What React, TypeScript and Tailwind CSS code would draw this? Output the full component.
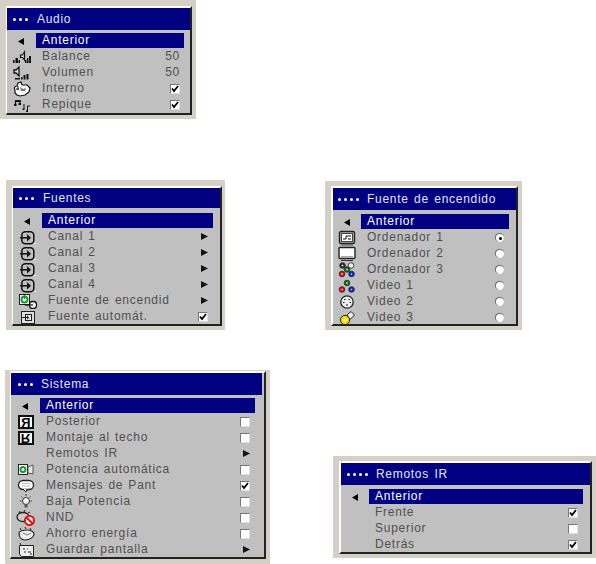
import React from "react";

const Back = () => (
  <svg width="7" height="7" viewBox="0 0 7 7"><path d="M0 3.5 6 0V7Z" fill="#000" /></svg>
);
const Arrow = () => (
  <svg width="7" height="7" viewBox="0 0 7 7" className="block"><path d="M0 0 7 3.5 0 7Z" fill="#111" /></svg>
);
const Check = ({ on }: { on?: boolean }) => (
  <div className="w-[10px] h-[10px] bg-white border-t border-l border-t-[#777] border-l-[#777] border-r border-b border-r-[#ddd] border-b-[#ddd] flex items-center justify-center">
    {on && (
      <svg width="8" height="8" viewBox="0 0 8 8" className="block"><path d="M1 3.5 3 6 7 1" fill="none" stroke="#000" strokeWidth="1.8" /></svg>
    )}
  </div>
);
const Radio = ({ on }: { on?: boolean }) => (
  <div className="w-[9px] h-[9px] rounded-full bg-white border-t border-l border-t-[#666] border-l-[#666] flex items-center justify-center">
    {on && <div className="w-[3px] h-[3px] rounded-full bg-black" />}
  </div>
);

const S = ({ w = 18, h = 16, children }: { w?: number; h?: number; children: React.ReactNode }) => (
  <svg width={w} height={h} viewBox={`0 0 ${w} ${h}`} className="block">{children}</svg>
);

const Balance = () => (
  <S w={20}>
    <path d="M1 14V11H2.5V14ZM3.5 14V9H6V14ZM6.5 14V11H8V14Z" fill="#111" />
    <path d="M8.5 6H10.5L12.5 3V11L10.5 8.5H8.5Z" fill="#ddd" stroke="#111" strokeWidth="1.2" />
    <path d="M13 14V11H14.5V14ZM15 14V9H16.5V14ZM17 14V7H19V14Z" fill="#111" />
  </S>
);
const Volumen = () => (
  <S w={20}>
    <path d="M2 5H4L7 2V11L4 8H2Z" fill="#ddd" stroke="#111" strokeWidth="1.3" />
    <path d="M3 13H8V14.5H3ZM9 14.5V12H10.5V14.5ZM11.5 14.5V10H13.5V14.5ZM14.5 14.5V9H16.5V14.5Z" fill="#111" />
  </S>
);
const Interno = () => (
  <S w={20}>
    <path d="M3 9C1 6 4 5 5 5L6 2 9 1 10 4 15 4 18 7 17 11 13 14 8 15 5 14 3 12Z" fill="#fff" stroke="#111" strokeWidth="1.2" />
    <path d="M8 6 11 8 14 7 13 10 9 10Z" fill="#777" />
    <path d="M6 5V9M4 8H7" stroke="#111" strokeWidth="1" />
  </S>
);
const Repique = () => (
  <S w={18}>
    <path d="M2.5 8V4H7V7" fill="none" stroke="#111" strokeWidth="1.3" />
    <path d="M2.5 3H7.5V5H2.5ZM1 7H3.5V9H1ZM5.5 6H8V8H5.5Z" fill="#111" />
    <path d="M11 7V12M14.5 9V14M14.5 9H17" fill="none" stroke="#111" strokeWidth="1" />
    <path d="M9.5 11.5H11.5V13H9.5ZM13 13.5H15V15H13Z" fill="#111" />
  </S>
);
const Canal = ({ n }: { n: string }) => (
  <S w={18}>
    <rect x="2.8" y="2.8" width="12" height="12" rx="3.5" fill="none" stroke="#111" strokeWidth="1.5" />
    <path d="M1 8.8H10" stroke="#111" strokeWidth="1.5" />
    <path d="M8 5 12 8.8 8 12.5Z" fill="#111" />
    <path d="M15 14.5H17" stroke="#fff" strokeWidth="1" />
    <title>{n}</title>
  </S>
);
const PowerSrc = () => (
  <S w={20}>
    <rect x="1.5" y="1.5" width="10" height="10" fill="#fff" stroke="#222" />
    <circle cx="6.5" cy="6.5" r="3" fill="none" stroke="#1a9a2a" strokeWidth="2" />
    <path d="M6.5 2V6" stroke="#1a9a2a" strokeWidth="1.5" />
    <rect x="11.5" y="8.5" width="7" height="7" rx="3" fill="#fff" stroke="#111" strokeWidth="1.3" />
    <path d="M7 12H15" stroke="#111" strokeWidth="1.3" />
  </S>
);
const Auto = () => (
  <S w={18}>
    <rect x="2.5" y="2.5" width="13" height="12" fill="#ddd" stroke="#222" />
    <rect x="6.5" y="5.5" width="6" height="6" fill="none" stroke="#222" />
    <path d="M3 8.5H9" stroke="#222" />
    <path d="M8 6.5 10 8.5 8 10.5Z" fill="#222" />
  </S>
);
const Mon1 = () => (
  <S w={18}>
    <rect x="1.5" y="1.5" width="15" height="12" rx="1.5" fill="#bbb" stroke="#222" strokeWidth="1.4" />
    <rect x="3.5" y="3.5" width="11" height="8" fill="#fff" stroke="#444" />
    <path d="M5 9H8V6H13M10 9H13" fill="none" stroke="#111" />
    <path d="M3 15H15" stroke="#555" />
  </S>
);
const Mon2 = () => (
  <S w={18}>
    <rect x="1" y="1.5" width="16" height="11" rx="1" fill="#fff" stroke="#222" strokeWidth="1.4" />
    <path d="M3 11H15" stroke="#aaa" strokeWidth="2" />
    <path d="M3 14.5H15" stroke="#333" />
  </S>
);
const Plug = ({ x, y, c }: { x: number; y: number; c: string }) => (
  <>
    <circle cx={x} cy={y} r={2.8} fill={c} stroke="#222" strokeWidth="0.8" />
    <circle cx={x} cy={y} r={0.8} fill="#fff" />
  </>
);
const Rgb3 = () => (
  <S w={18}>
    <Plug x={4.5} y={3.5} c="#333" />
    <Plug x={13} y={3.5} c="#eee" />
    <Plug x={9} y={7.5} c="#0a7a1a" />
    <Plug x={4} y={12} c="#e01010" />
    <Plug x={13.5} y={12} c="#1020d0" />
  </S>
);
const Rgb1 = () => (
  <S w={18}>
    <Plug x={9} y={5} c="#0a7a1a" />
    <Plug x={4} y={11.5} c="#e01010" />
    <Plug x={13.5} y={11.5} c="#1020d0" />
  </S>
);
const SVideo = () => (
  <S w={18}>
    <circle cx="9" cy="8" r="6.2" fill="#eee" stroke="#222" strokeWidth="1.3" />
    <path d="M6 5.5H7.5M10.5 5.5H12M5 8.5H6.5M11.5 8.5H13M8 11H10" stroke="#222" />
  </S>
);
const Rca = () => (
  <S w={18}>
    <path d="M9 5 13 1.5 16.5 5 12 9.5Z" fill="#eee" stroke="#222" />
    <circle cx="7" cy="10" r="4.6" fill="#f0e010" stroke="#222" />
    <circle cx="7" cy="10" r="1.6" fill="#fff8a0" />
  </S>
);
const Flip = ({ v }: { v?: boolean }) => (
  <div className="w-4 h-[14px] bg-white border-2 border-[#111] flex items-center justify-center overflow-hidden">
    <span className={v ? "-scale-y-100 font-bold text-[13px] leading-none text-black" : "-scale-x-100 font-bold text-[13px] leading-none text-black"}>R</span>
  </div>
);
const PowerAuto = () => (
  <S w={18}>
    <rect x="1.5" y="2.5" width="9" height="10" fill="#fff" stroke="#222" />
    <circle cx="6" cy="7.5" r="2.5" fill="none" stroke="#1a9a2a" strokeWidth="2" />
    <path d="M11 5 16 3V12L11 11Z" fill="#e8e8e8" stroke="#555" />
  </S>
);
const Msg = () => (
  <S w={18}>
    <rect x="1.5" y="2.5" width="15" height="9" rx="4.5" fill="#fff" stroke="#222" strokeWidth="1.3" />
    <path d="M6 11 9 14 10 11" fill="#fff" stroke="#222" />
    <path d="M5 5.5H13M5 8H13" stroke="#bbb" />
  </S>
);
const Bulb = () => (
  <S w={18}>
    <circle cx="9" cy="7" r="3.5" fill="#f4f4f4" stroke="#333" />
    <rect x="7.5" y="10" width="3" height="3.5" fill="#555" />
    <path d="M9 0V2M3 7H4.5M13.5 7H15M4.5 2.5 5.5 3.5M13.5 2.5 12.5 3.5" stroke="#444" />
  </S>
);
const Nnd = () => (
  <S w={20}>
    <ellipse cx="7" cy="7" rx="6" ry="4.5" fill="#ccc" stroke="#222" strokeWidth="1.3" />
    <path d="M3 3 4 1M8 2 9 0M12 3 14 2" stroke="#222" />
    <circle cx="13.5" cy="10.5" r="4.5" fill="#fff" stroke="#e01010" strokeWidth="2" />
    <path d="M10.5 7.5 16.5 13.5" stroke="#e01010" strokeWidth="2" />
  </S>
);
const Ahorro = () => (
  <S w={20}>
    <path d="M3 7C3 5 8 4 11 4 15 4 18 6 18 8 18 11 14 14 9 14 5 14 3 11 3 7Z" fill="#eee" stroke="#222" strokeWidth="1.2" />
    <path d="M4 2 5 4M9 1 10 3M14 2 15 4" stroke="#222" />
    <path d="M7 7 11 9 15 7" fill="none" stroke="#777" />
  </S>
);
const Screen = () => (
  <S w={18}>
    <path d="M2.5 3.5H16.5V14.5H4.5L2.5 12Z" fill="#eee" stroke="#222" />
    <path d="M3 1 4 3" stroke="#222" />
    <path d="M6 7H8M10 7H11M7 10H9M11 10H14M13 12H15" stroke="#222" />
  </S>
);

type RowProps = {
  icon?: React.ReactNode;
  label: string;
  right?: React.ReactNode;
  active?: boolean;
};

const Row = ({ icon, label, right, active, iconCol, mr, pr }: RowProps & { iconCol: string; mr: string; pr: string }) => (
  <div className="flex h-4">
    <div className={`${iconCol} h-[16px] flex items-center justify-center`}>{icon}</div>
    <div
      className={`${mr} ${pr} flex-1 h-[15px] pl-[6px] flex items-center justify-between text-[12px] leading-none tracking-[0.75px] [word-spacing:1px] whitespace-nowrap ${
        active ? "bg-[#000080] text-white" : "text-[#505050]"
      }`}
    >
      <span className="mb-[2px]">{label}</span>
      {right}
    </div>
  </div>
);

const Panel = ({
  wrap,
  box,
  bar,
  body,
  dots,
  title,
  titleGap,
  iconCol,
  mr,
  pr = "pr-[5px]",
  rows,
}: {
  wrap: string;
  box: string;
  bar: string;
  body: string;
  dots: number;
  title: string;
  titleGap: string;
  iconCol: string;
  mr: string;
  pr?: string;
  rows: RowProps[];
}) => (
  <div className={`${wrap} bg-[#d4d0c8]`}>
    <div className={`${box} bg-[#c0c0c0] border-t-2 border-t-white border-l-white border-r-2 border-b-2 border-r-[#222] border-b-[#222] font-['Liberation_Sans',sans-serif]`}>
      <div className={`${bar} bg-[#000080] flex items-center text-[12px] tracking-[0.7px] [word-spacing:1.5px] leading-none`}>
        <div className={`flex gap-[3px] ${titleGap}`}>
          {Array.from({ length: dots }).map((_, i) => (
            <div key={i} className="w-[3px] h-[3px] rounded-full bg-white" />
          ))}
        </div>
        <span className="text-[#e4e4f4] mb-[1px]">{title}</span>
      </div>
      <div className={body}>
        {rows.map((r) => (
          <Row key={r.label} {...r} iconCol={iconCol} mr={mr} pr={pr} />
        ))}
      </div>
    </div>
  </div>
);

const Val = () => <span className="text-[#505050] mb-[2px]">50</span>;

export default function App() {
  return (
    <div className="w-[596px] h-[564px] bg-white overflow-hidden">
      <Panel
        wrap="w-[196px] h-[119px] pl-[6px] pt-[6px]"
        box="w-[186px] h-[109px] border-l"
        bar="h-[22px] pl-[6px]"
        body="pt-[3px]"
        dots={3}
        title="Audio"
        titleGap="mr-[9px]"
        iconCol="w-[29px]"
        mr="mr-[6px]"
        pr="pr-[4px]"
        rows={[
          { icon: <Back />, label: "Anterior", active: true },
          { icon: <Balance />, label: "Balance", right: <Val /> },
          { icon: <Volumen />, label: "Volumen", right: <Val /> },
          { icon: <Interno />, label: "Interno", right: <Check on /> },
          { icon: <Repique />, label: "Repique", right: <Check on /> },
        ]}
      />
      <div className="flex mt-[61px]">
        <div className="ml-[6px]">
          <Panel
            wrap="w-[219px] h-[150px] pl-[6px] pt-[6px]"
            box="w-[210px] h-[140px] border-l"
            bar="h-[20px] pl-[6px]"
            body="pt-[5px]"
            dots={3}
            title="Fuentes"
            titleGap="mr-[9px]"
            iconCol="w-[29px]"
            mr="mr-[7px]"
            rows={[
              { icon: <Back />, label: "Anterior", active: true },
              { icon: <Canal n="1" />, label: "Canal 1", right: <Arrow /> },
              { icon: <Canal n="2" />, label: "Canal 2", right: <Arrow /> },
              { icon: <Canal n="3" />, label: "Canal 3", right: <Arrow /> },
              { icon: <Canal n="4" />, label: "Canal 4", right: <Arrow /> },
              { icon: <PowerSrc />, label: "Fuente de encendid", right: <Arrow /> },
              { icon: <Auto />, label: "Fuente automát.", right: <Check on /> },
            ]}
          />
        </div>
        <div className="ml-[100px] mt-[1px]">
          <Panel
            wrap="w-[197px] h-[149px] pl-[6px] pt-[5px]"
            box="w-[187px] h-[140px] border-l-2"
            bar="h-[22px] pl-[5px]"
            body="pt-[4px]"
            dots={4}
            title="Fuente de encendido"
            titleGap="mr-[8px]"
            iconCol="w-[28px]"
            mr="mr-[7px]"
            rows={[
              { icon: <Back />, label: "Anterior", active: true },
              { icon: <Mon1 />, label: "Ordenador 1", right: <Radio on /> },
              { icon: <Mon2 />, label: "Ordenador 2", right: <Radio /> },
              { icon: <Rgb3 />, label: "Ordenador 3", right: <Radio /> },
              { icon: <Rgb1 />, label: "Video 1", right: <Radio /> },
              { icon: <SVideo />, label: "Video 2", right: <Radio /> },
              { icon: <Rca />, label: "Video 3", right: <Radio /> },
            ]}
          />
        </div>
      </div>
      <div className="flex mt-[40px]">
        <div className="ml-[5px]">
          <Panel
            wrap="w-[265px] h-[194px] pl-[5px] pt-[1px]"
            box="w-[256px] h-[188px] border-l"
            bar="h-[22px] pl-[7px] mr-[2px]"
            body="pt-[3px]"
            dots={3}
            title="Sistema"
            titleGap="mr-[8px]"
            iconCol="w-[29px]"
            mr="mr-[9px]"
            rows={[
              { icon: <Back />, label: "Anterior", active: true },
              { icon: <Flip />, label: "Posterior", right: <Check /> },
              { icon: <Flip v />, label: "Montaje al techo", right: <Check /> },
              { label: "Remotos IR", right: <Arrow /> },
              { icon: <PowerAuto />, label: "Potencia automática", right: <Check /> },
              { icon: <Msg />, label: "Mensajes de Pant", right: <Check on /> },
              { icon: <Bulb />, label: "Baja Potencia", right: <Check /> },
              { icon: <Nnd />, label: "NND", right: <Check /> },
              { icon: <Ahorro />, label: "Ahorro energía", right: <Check /> },
              { icon: <Screen />, label: "Guardar pantalla", right: <Arrow /> },
            ]}
          />
        </div>
        <div className="ml-[63px] mt-[86px]">
          <Panel
            wrap="w-[263px] h-[102px] pl-[6px] pt-[5px]"
            box="w-[253px] h-[93px] border-l-2"
            bar="h-[22px] pl-[6px]"
            body="pt-[4px]"
            dots={4}
            title="Remotos IR"
            titleGap="mr-[8px]"
            iconCol="w-[28px]"
            mr="mr-[7px]"
            rows={[
              { icon: <Back />, label: "Anterior", active: true },
              { label: "Frente", right: <Check on /> },
              { label: "Superior", right: <Check /> },
              { label: "Detrás", right: <Check on /> },
            ]}
          />
        </div>
      </div>
    </div>
  );
}
